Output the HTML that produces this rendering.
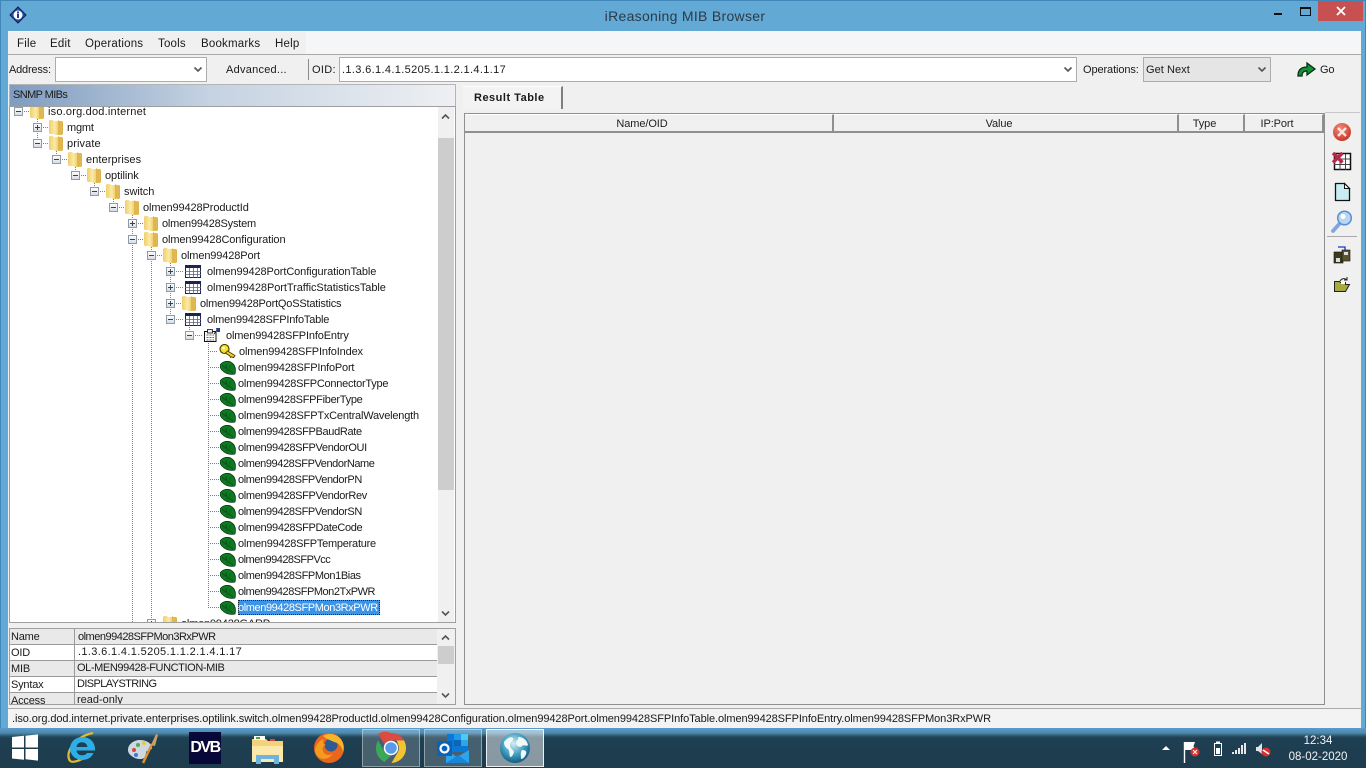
<!DOCTYPE html>
<html><head><meta charset="utf-8"><title>iReasoning MIB Browser</title>
<style>
html,body{margin:0;padding:0;width:1366px;height:768px;overflow:hidden;background:#62a9d6}
body{font:11px/16px "Liberation Sans",Arial,sans-serif;color:#1a1a1a;letter-spacing:-.2px;position:relative}
div{position:absolute;box-sizing:border-box;white-space:nowrap}
.t{height:16px;line-height:16px}
.m{top:36px;letter-spacing:.2px;font-size:11.5px;height:16px;line-height:17px}
svg{position:absolute;left:0;top:0}
.h{background:#f0f0f0;border-right:2px solid #8f8f8f;border-bottom:2px solid #8f8f8f;border-top:1px solid #fff;text-align:center;top:114px;height:19px;line-height:18px;color:#222;padding-right:13px;letter-spacing:-.1px}
.c1{left:0;width:65px;height:16px;border-right:1px solid #9a9a9a;border-bottom:1px solid #9a9a9a;padding-left:1px;line-height:17px}
.c2{left:65px;width:362px;height:16px;border-bottom:1px solid #9a9a9a;padding-left:2px;line-height:15px;letter-spacing:-.4px}
.g{background:#e9e9e9}.w{background:#fff}
</style></head><body>
<svg width="0" height="0" style="position:absolute">
<defs>
<linearGradient id="fg" x1="0" x2="1" y1="0" y2="0"><stop offset="0" stop-color="#efcf6c"/><stop offset=".4" stop-color="#fbeaa6"/><stop offset=".65" stop-color="#f0d070"/><stop offset="1" stop-color="#d9ae48"/></linearGradient>
<linearGradient id="bb" x1="0" x2="0" y1="0" y2="1"><stop offset="0" stop-color="#fff"/><stop offset="1" stop-color="#d5dce4"/></linearGradient>
<radialGradient id="rd" cx=".4" cy=".3" r=".8"><stop offset="0" stop-color="#f08a78"/><stop offset="1" stop-color="#c42f1f"/></radialGradient>
<radialGradient id="gl" cx=".45" cy=".35" r=".7"><stop offset="0" stop-color="#d6eef6"/><stop offset=".55" stop-color="#3e9dbd"/><stop offset="1" stop-color="#0d4f75"/></radialGradient>
<symbol id="fo" viewBox="0 0 14 16"><path d="M0 2l1-1h3l1 1h8l1 1v12l-1 1H6l-1-1H1l-1-1z" fill="url(#fg)"/><path d="M9 1l3 2v12l-3 1z" fill="#dfb64f"/></symbol>
<symbol id="ta" viewBox="0 0 16 13"><rect x=".5" y=".5" width="15" height="12" fill="#fff" stroke="#1c2452"/><rect width="16" height="3" fill="#1c2452"/><path d="M0 6.500h16M0 9.500h16M4.500 3v10M8.500 3v10M12.500 3v10" stroke="#5a6080" stroke-width=".8"/></symbol>
<symbol id="le" viewBox="0 0 16 14"><path d="M0 4C3 0 9-1 12 2c3 2 4 6 3 11-4 1-9 0-12-3C1 9 0 6 0 4z" fill="#0f7a24" stroke="#063a10" stroke-width=".8"/><path d="M2 4l11 8M6 3l1 4M10 4v4M3 7h4M6 10l3-1" stroke="#0a5518" stroke-width=".9" fill="none"/></symbol>
<symbol id="ke" viewBox="0 0 17 14"><circle cx="5.500" cy="5" r="4.500" fill="#f6e21e" stroke="#4a3a00" stroke-width="1.100"/><circle cx="4.500" cy="4" r="1.300" fill="#fff"/><path d="M8.500 7l7.500 4.500-1.500 2.300-1.800-1-1 .7-1-1.800-4.300-2.700z" fill="#f0d420" stroke="#4a3a00" stroke-width=".9"/></symbol>
<symbol id="en" viewBox="0 0 16 14"><path d="M.5 3.500h11.500v10H.5z" fill="#fff" stroke="#111"/><path d="M2.500 7h7.500M2.500 9.500h7.500M2.500 12h7.500" stroke="#333" stroke-width=".8" stroke-dasharray="2 1"/><rect x="3.500" y="1.500" width="5" height="3.500" fill="#eee" stroke="#111" stroke-width=".8"/><path d="M10 6l3-4" stroke="#222"/><path d="M12 0h4v4h-3z" fill="#1d3f8a"/></symbol>
<symbol id="pl" viewBox="0 0 9 9"><rect x=".5" y=".5" width="8" height="8" fill="url(#bb)" stroke="#8e9aa6"/><path d="M2 4.500h5M4.500 2v5" stroke="#39424c"/></symbol>
<symbol id="mi" viewBox="0 0 9 9"><rect x=".5" y=".5" width="8" height="8" fill="url(#bb)" stroke="#8e9aa6"/><path d="M2 4.500h5" stroke="#39424c"/></symbol>
</defs></svg>

<!-- window frame -->
<div style="left:0;top:0;width:1366px;height:735px;background:#62a9d6;border:1px solid #4186b8"></div>
<svg width="36" height="30" style="left:0;top:0"><path d="M18 7l8 8-8 8-8-8z" fill="#2a4aa8" stroke="#0f1f55"/><circle cx="18" cy="15" r="4.500" fill="#fff"/><rect x="17" y="13.500" width="2" height="4.500" fill="#1f3b96"/><rect x="17" y="11.500" width="2" height="1.500" fill="#1f3b96"/></svg>
<div style="left:485px;width:400px;top:6px;height:20px;text-align:center;font-size:14px;line-height:20px;color:#2d3a45;letter-spacing:.3px">iReasoning MIB Browser</div>
<div style="left:1274px;top:13px;width:8px;height:2px;background:#111"></div>
<div style="left:1300px;top:7px;width:11px;height:9px;border:1px solid #111;border-top-width:2px"></div>
<div style="left:1318px;top:1px;width:45px;height:20px;background:#c75050"></div>
<svg width="12" height="12" style="left:1335px;top:5px"><path d="M2 2l8 8M10 2l-8 8" stroke="#fff" stroke-width="1.800"/></svg>

<!-- client -->
<div style="left:8px;top:31px;width:1353px;height:697px;background:#f0f0f0"></div>
<div style="left:8px;top:31px;width:1353px;height:24px;background:#f5f6f7;border-bottom:1px solid #a9a9a9"></div>
<div style="left:8px;top:32px;width:298px;height:22px;background:#f0f0f0"></div>
<div class="m" style="left:17px">File</div>
<div class="m" style="left:50px">Edit</div>
<div class="m" style="left:85px">Operations</div>
<div class="m" style="left:158px">Tools</div>
<div class="m" style="left:201px">Bookmarks</div>
<div class="m" style="left:275px">Help</div>

<!-- toolbar -->
<div class="t" style="left:9px;top:62px">Address:</div>
<div style="left:55px;top:57px;width:152px;height:25px;background:#fff;border:1px solid #acacac"></div>
<div class="t" style="left:226px;top:62px;letter-spacing:.25px">Advanced...</div>
<div style="left:308px;top:59px;width:1px;height:21px;background:#8a8a8a"></div>
<div class="t" style="left:312px;top:62px;letter-spacing:.3px">OID:</div>
<div style="left:339px;top:57px;width:738px;height:25px;background:#fff;border:1px solid #acacac"></div>
<div class="t" style="left:342px;top:62px;letter-spacing:.35px">.1.3.6.1.4.1.5205.1.1.2.1.4.1.17</div>
<div class="t" style="left:1083px;top:62px;letter-spacing:-.1px">Operations:</div>
<div style="left:1143px;top:57px;width:128px;height:25px;background:#e5e5e5;border:1px solid #acacac"></div>
<div class="t" style="left:1146px;top:62px;letter-spacing:.05px">Get Next</div>
<svg width="1366" height="90" style="left:0;top:0">
<path d="M194.500 67.500l3.500 3.500 3.500-3.500M1064.500 67.500l3.500 3.500 3.500-3.500M1258.500 67.500l3.500 3.500 3.500-3.500" fill="none" stroke="#555" stroke-width="1.600"/>
<path d="M1298 76c0-6 3-9 9-9v-4l8 6-8 6v-4c-3 0-5 1-5 5z" fill="#12923a" stroke="#0b2e14" stroke-width="1.300"/>
</svg>
<div class="t" style="left:1320px;top:62px">Go</div>

<!-- left pane header -->
<div style="left:9px;top:84px;width:447px;height:23px;background:linear-gradient(90deg,#7f9cc0,#c5d2e2 45%,#eef0f3);border:1px solid #b5b5b5"></div>
<div class="t" style="left:13px;top:87px;letter-spacing:-.6px;line-height:17px">SNMP MIBs</div>

<!-- tree -->
<div style="left:9px;top:106px;width:447px;height:517px;background:#fff;border:1px solid #9f9f9f"></div>
<svg width="1366" height="768" style="clip-path:polygon(10px 107px,438px 107px,438px 622px,10px 622px)">
<g stroke="#808080" stroke-dasharray="1 1" fill="none">
<path d="M37.500 117v26M56.500 149v10M75.500 165v10M94.500 181v10M113.500 197v10M132.500 213v420M151.500 245v400M170.500 261v58M189.500 325v10M208.500 341v266.500"/>
<path d="M22 111.500h8M41 127.500h8M41 143.500h8M60 159.500h8M79 175.500h8M98 191.500h8M117 207.500h8M136 223.500h8M136 239.500h8M155 255.500h8M174 271.500h10M174 287.500h10M174 303.500h8M174 319.500h10M193 335.500h10M208 351.500h10M208 367.500h11M208 383.500h11M208 399.500h11M208 415.500h11M208 431.500h11M208 447.500h11M208 463.500h11M208 479.500h11M208 495.500h11M208 511.500h11M208 527.500h11M208 543.500h11M208 559.500h11M208 575.500h11M208 591.500h11M208 607.500h11M155 623.500h8"/>
</g>
<use href="#mi" x="14" y="107" width="9" height="9"/>
<use href="#pl" x="33" y="123" width="9" height="9"/>
<use href="#mi" x="33" y="139" width="9" height="9"/>
<use href="#mi" x="52" y="155" width="9" height="9"/>
<use href="#mi" x="71" y="171" width="9" height="9"/>
<use href="#mi" x="90" y="187" width="9" height="9"/>
<use href="#mi" x="109" y="203" width="9" height="9"/>
<use href="#pl" x="128" y="219" width="9" height="9"/>
<use href="#mi" x="128" y="235" width="9" height="9"/>
<use href="#mi" x="147" y="251" width="9" height="9"/>
<use href="#pl" x="166" y="267" width="9" height="9"/>
<use href="#pl" x="166" y="283" width="9" height="9"/>
<use href="#pl" x="166" y="299" width="9" height="9"/>
<use href="#mi" x="166" y="315" width="9" height="9"/>
<use href="#mi" x="185" y="331" width="9" height="9"/>
<use href="#pl" x="147" y="619" width="9" height="9"/>
<use href="#fo" x="30" y="103" width="14" height="16"/>
<use href="#fo" x="49" y="119" width="14" height="16"/>
<use href="#fo" x="49" y="135" width="14" height="16"/>
<use href="#fo" x="68" y="151" width="14" height="16"/>
<use href="#fo" x="87" y="167" width="14" height="16"/>
<use href="#fo" x="106" y="183" width="14" height="16"/>
<use href="#fo" x="125" y="199" width="14" height="16"/>
<use href="#fo" x="144" y="215" width="14" height="16"/>
<use href="#fo" x="144" y="231" width="14" height="16"/>
<use href="#fo" x="163" y="247" width="14" height="16"/>
<use href="#fo" x="182" y="295" width="14" height="16"/>
<use href="#fo" x="163" y="615" width="14" height="16"/>
<use href="#ta" x="185" y="265" width="16" height="13"/>
<use href="#ta" x="185" y="281" width="16" height="13"/>
<use href="#ta" x="185" y="313" width="16" height="13"/>
<use href="#en" x="204" y="328" width="16" height="14"/>
<use href="#ke" x="219" y="344" width="17" height="14"/>
<use href="#le" x="220" y="361" width="16" height="14"/>
<use href="#le" x="220" y="377" width="16" height="14"/>
<use href="#le" x="220" y="393" width="16" height="14"/>
<use href="#le" x="220" y="409" width="16" height="14"/>
<use href="#le" x="220" y="425" width="16" height="14"/>
<use href="#le" x="220" y="441" width="16" height="14"/>
<use href="#le" x="220" y="457" width="16" height="14"/>
<use href="#le" x="220" y="473" width="16" height="14"/>
<use href="#le" x="220" y="489" width="16" height="14"/>
<use href="#le" x="220" y="505" width="16" height="14"/>
<use href="#le" x="220" y="521" width="16" height="14"/>
<use href="#le" x="220" y="537" width="16" height="14"/>
<use href="#le" x="220" y="553" width="16" height="14"/>
<use href="#le" x="220" y="569" width="16" height="14"/>
<use href="#le" x="220" y="585" width="16" height="14"/>
<use href="#le" x="220" y="601" width="16" height="14"/>
</svg>
<div style="left:10px;top:107px;width:428px;height:515px;overflow:hidden">
<div style="left:0;top:1px;width:428px;height:520px">
<div class="t" style="left:38px;top:-4px;letter-spacing:.2px">iso.org.dod.internet</div>
<div class="t" style="left:57px;top:12px">mgmt</div>
<div class="t" style="left:57px;top:28px;letter-spacing:.1px">private</div>
<div class="t" style="left:76px;top:44px;letter-spacing:.07px">enterprises</div>
<div class="t" style="left:95px;top:60px;letter-spacing:-.07px">optilink</div>
<div class="t" style="left:114px;top:76px;letter-spacing:-.05px">switch</div>
<div class="t" style="left:133px;top:92px;letter-spacing:-.1px">olmen99428ProductId</div>
<div class="t" style="left:152px;top:108px">olmen99428System</div>
<div class="t" style="left:152px;top:124px;letter-spacing:-.11px">olmen99428Configuration</div>
<div class="t" style="left:171px;top:140px;letter-spacing:-.13px">olmen99428Port</div>
<div class="t" style="left:197px;top:156px;letter-spacing:-.1px">olmen99428PortConfigurationTable</div>
<div class="t" style="left:197px;top:172px;letter-spacing:-.06px">olmen99428PortTrafficStatisticsTable</div>
<div class="t" style="left:190px;top:188px">olmen99428PortQoSStatistics</div>
<div class="t" style="left:197px;top:204px">olmen99428SFPInfoTable</div>
<div class="t" style="left:216px;top:220px;letter-spacing:-.15px">olmen99428SFPInfoEntry</div>
<div class="t" style="left:229px;top:236px;letter-spacing:-.15px">olmen99428SFPInfoIndex</div>
<div class="t" style="left:228px;top:252px">olmen99428SFPInfoPort</div>
<div class="t" style="left:228px;top:268px;letter-spacing:-.24px">olmen99428SFPConnectorType</div>
<div class="t" style="left:228px;top:284px;letter-spacing:-.29px">olmen99428SFPFiberType</div>
<div class="t" style="left:228px;top:300px">olmen99428SFPTxCentralWavelength</div>
<div class="t" style="left:228px;top:316px;letter-spacing:-.34px">olmen99428SFPBaudRate</div>
<div class="t" style="left:228px;top:332px;letter-spacing:-.34px">olmen99428SFPVendorOUI</div>
<div class="t" style="left:228px;top:348px;letter-spacing:-.42px">olmen99428SFPVendorName</div>
<div class="t" style="left:228px;top:364px;letter-spacing:-.39px">olmen99428SFPVendorPN</div>
<div class="t" style="left:228px;top:380px;letter-spacing:-.34px">olmen99428SFPVendorRev</div>
<div class="t" style="left:228px;top:396px;letter-spacing:-.39px">olmen99428SFPVendorSN</div>
<div class="t" style="left:228px;top:412px;letter-spacing:-.34px">olmen99428SFPDateCode</div>
<div class="t" style="left:228px;top:428px;letter-spacing:-.24px">olmen99428SFPTemperature</div>
<div class="t" style="left:228px;top:444px;letter-spacing:-.5px">olmen99428SFPVcc</div>
<div class="t" style="left:228px;top:460px;letter-spacing:-.39px">olmen99428SFPMon1Bias</div>
<div class="t" style="left:228px;top:476px;letter-spacing:-.47px">olmen99428SFPMon2TxPWR</div>
<div class="t" style="left:228px;top:492px;width:142px;height:15px;background:#3d94e6;color:#fff;outline:1px dotted #1a2b3c;outline-offset:-1px;letter-spacing:-.4px">olmen99428SFPMon3RxPWR</div>
<div class="t" style="left:171px;top:508px">olmen99428GARP</div>
</div>
</div>
<!-- tree scrollbar -->
<div style="left:438px;top:107px;width:16px;height:515px;background:#f0f0f0"></div>
<div style="left:438px;top:138px;width:16px;height:352px;background:#cdcdcd"></div>
<svg width="1366" height="640">
<path d="M442 118.500l3.500-3.500 3.500 3.500M442 611.500l3.500 3.500 3.500-3.500" fill="none" stroke="#555" stroke-width="1.600"/>
</svg>

<!-- details table -->
<div style="left:9px;top:628px;width:447px;height:77px;background:#f0f0f0;border:1px solid #9f9f9f;overflow:hidden">
<div style="left:0;top:0;width:428px;height:77px;overflow:hidden">
<div class="c1 g" style="top:0">Name</div><div class="c2 g" style="top:0;padding-left:3px;line-height:17px;letter-spacing:-.5px">olmen99428SFPMon3RxPWR</div>
<div class="c1 w" style="top:16px">OID</div><div class="c2 w" style="top:16px;padding-left:3px;letter-spacing:.35px">.1.3.6.1.4.1.5205.1.1.2.1.4.1.17</div>
<div class="c1 g" style="top:32px">MIB</div><div class="c2 g" style="top:32px">OL-MEN99428-FUNCTION-MIB</div>
<div class="c1 w" style="top:48px">Syntax</div><div class="c2 w" style="top:48px;letter-spacing:-.6px">DISPLAYSTRING</div>
<div class="c1 g" style="top:64px;border-bottom:0">Access</div><div class="c2 g" style="top:64px;border-bottom:0;letter-spacing:0">read-only</div>
</div>
<div style="left:428px;top:17px;width:16px;height:18px;background:#cdcdcd"></div>
</div>
<svg width="1366" height="768">
<path d="M442 639.500l3.500-3.500 3.500 3.500M442 693.500l3.500 3.500 3.500-3.500" fill="none" stroke="#555" stroke-width="1.600"/>
</svg>

<!-- right pane -->
<div style="left:463px;top:86px;width:100px;height:23px;background:#f3f3f3;border-right:2px solid #7f7f7f;border-top:1px solid #fff"></div>
<div class="t" style="left:474px;top:90px;font-weight:bold;letter-spacing:.5px">Result Table</div>
<div style="left:464px;top:113px;width:861px;height:592px;background:#f0f0f0;border:1px solid #8f8f8f"></div>
<div class="h" style="left:465px;width:369px">Name/OID</div>
<div class="h" style="left:834px;width:345px">Value</div>
<div class="h" style="left:1179px;width:66px">Type</div>
<div class="h" style="left:1245px;width:79px">IP:Port</div>
<div style="left:1325px;top:112px;width:35px;height:1px;background:#c8c8c8"></div>

<!-- right toolbar icons -->
<svg width="1366" height="768">
<circle cx="1342" cy="132" r="9" fill="url(#rd)"/>
<path d="M1338 128l8 8M1346 128l-8 8" stroke="#fbe3de" stroke-width="2.400"/>
<rect x="1334.500" y="153.500" width="16" height="16" fill="#fff" stroke="#111" stroke-width="1.500"/>
<path d="M1334 159h16M1334 164.500h16M1340 154v16M1345.500 154v16" stroke="#444"/>
<path d="M1333 153l9.500 9.500M1342.500 153l-9.500 9.500" stroke="#b32a4a" stroke-width="3.400"/>
<path d="M1335.500 183.500h9l5 5v12h-14z" fill="#c8ecf2" stroke="#111" stroke-width="1.300"/>
<path d="M1344.500 183.500v5h5z" fill="#fff" stroke="#111"/>
<path d="M1333 231l8-9" stroke="#7fa6e0" stroke-width="3.800" stroke-linecap="round"/>
<circle cx="1344.500" cy="218" r="6.800" fill="#b8d8f2" stroke="#5b8fd0" stroke-width="1.500"/>
<circle cx="1343" cy="216.500" r="2.500" fill="#fff"/>
<rect x="1327" y="236" width="30" height="1" fill="#a9a9a9"/>
<path d="M1338 247h7v4" stroke="#1a35c9" fill="none" stroke-width="1.300"/>
<rect x="1334" y="252" width="9" height="11" fill="#3a3a1e" stroke="#111" stroke-width=".6"/>
<rect x="1342" y="250" width="8" height="11" fill="#57552c" stroke="#111" stroke-width=".6"/>
<rect x="1336" y="258" width="4" height="4" fill="#ddd"/><rect x="1344" y="252" width="4" height="3" fill="#ddd"/>
<path d="M1334.500 281.500h5l1 1h5v2h4l-4 7h-11z" fill="#a7a83e" stroke="#222"/>
<path d="M1340 281c2-3 5-3 7-1M1347 277v3h-3" fill="none" stroke="#222"/>
<rect x="1341" y="282" width="4" height="2" fill="#fff"/>
</svg>

<!-- status bar -->
<div style="left:8px;top:708px;width:1353px;height:20px;background:#f3f3f3;border-top:1px solid #a9a9a9"></div>
<div class="t" style="left:12px;top:711px;letter-spacing:-.085px">.iso.org.dod.internet.private.enterprises.optilink.switch.olmen99428ProductId.olmen99428Configuration.olmen99428Port.olmen99428SFPInfoTable.olmen99428SFPInfoEntry.olmen99428SFPMon3RxPWR</div>

<!-- taskbar -->
<div style="left:0;top:728px;width:1366px;height:40px;background:linear-gradient(180deg,#5a9ccb 0,#4d89ae 5px,#2b5369 8px,#1f3f52 10px,#1d3c4e 100%)"></div>
<div style="left:362px;top:729px;width:58px;height:38px;background:rgba(255,255,255,.18);border:1px solid rgba(255,255,255,.4)"></div>
<div style="left:424px;top:729px;width:58px;height:38px;background:rgba(255,255,255,.18);border:1px solid rgba(255,255,255,.4)"></div>
<div style="left:486px;top:729px;width:58px;height:38px;background:rgba(255,255,255,.48);border:1px solid rgba(255,255,255,.85)"></div>
<svg width="1366" height="768">
<!-- windows -->
<path d="M12 737l12-1.200v11.700H12zM25.500 735.700l12.500-1.300v13.100H25.500zM12 749h12v10.700l-12-1.200zM25.500 749H38v11.600l-12.500-1.300z" fill="#fff"/>
<!-- IE -->
<path d="M70 761C64 752 76 736 93 733M70 761c3 2 8 0 12-2" fill="none" stroke="#e2bc2c" stroke-width="2.200"/>
<path d="M82 737a12 11.500 0 0 0 0 23c5.500 0 9.500-2.500 11.500-7h-6.500c-1 1.500-2.700 2.300-5 2.300-3 0-5-1.800-5.500-4.800H95c.6-8-5-13.500-13-13.500zm-5.500 10c.5-3 2.500-4.800 5.500-4.800s5 1.800 5.500 4.800z" fill="#2eaee6"/>
<!-- paint -->
<path d="M128 750c0-6 6-10 12-10 6 0 11 3 12 7 .5 3-3 3-5 4-2 1 0 5-3 7-3 2-8 1-11-1-3-2-5-4-5-7z" fill="#cdd8e0"/>
<circle cx="134" cy="750" r="2" fill="#d8463c"/><circle cx="138" cy="745" r="2" fill="#4fae4a"/><circle cx="144" cy="743" r="2" fill="#e6c93a"/><circle cx="136" cy="755" r="2" fill="#3a7ad8"/>
<path d="M143 763l9-19" stroke="#e0902e" stroke-width="2.500"/><path d="M151 745l5-11 2 1-3 11z" fill="#c9a060"/>
<!-- DVB -->
<rect x="189" y="732" width="32" height="32" fill="#070738"/>
<!-- explorer -->
<path d="M252 739h14l2 2h15v21h-31z" fill="#f3d27a"/><path d="M254 736h11v4h-11z" fill="#fff"/><rect x="256" y="737" width="4" height="2" fill="#4aa84a"/><rect x="270" y="739" width="5" height="2" fill="#d84a3a"/>
<path d="M252 746h31v16h-31z" fill="#fbe9ac"/>
<path d="M256 764v-9h23v9h-5v-5h-13v5z" fill="#6fb4dc"/>
<!-- firefox -->
<circle cx="329" cy="748" r="15" fill="#e8671c"/>
<circle cx="331" cy="745" r="6.500" fill="#2f5a92"/>
<path d="M315 750c1-6 5-10 9-11-2 3-1 5 2 6-3 1-4 3-3 6 1 4 6 5 10 3-3 4-9 6-13 4-3-2-5-5-5-8z" fill="#f59c1e"/>
<path d="M323 736c6-4 15-2 19 5 2 4 2 8 1 11-1-5-4-9-9-10-4-2-8-3-11-6z" fill="#f6b62c"/>
<!-- chrome -->
<path d="M391 733a15 15 0 0 1 13 7.500h-13a7.500 7.500 0 0 0-6.500 3.800L378 733.800A15 15 0 0 1 391 733z" fill="#dd4b3e"/>
<path d="M376 748a15 15 0 0 1 2-7.500l6.500 11.200a7.500 7.500 0 0 0 6.500 3.800L384.500 762A15 15 0 0 1 376 748z" fill="#3aa856"/>
<path d="M404 740.500a15 15 0 0 1-12.500 22.500l6.500-11.300a7.500 7.500 0 0 0 0-7.500 7.500 7.500 0 0 0-1.500-3.700z" fill="#f4c430"/>
<circle cx="391" cy="748" r="6.500" fill="#5a9aea" stroke="#fff" stroke-width="1.500"/>
<!-- outlook -->
<rect x="447" y="734" width="21" height="18" fill="#0a78d4"/>
<rect x="454" y="734" width="7" height="6" fill="#1e9bef"/><rect x="461" y="734" width="7" height="6" fill="#50c8f5"/><rect x="454" y="740" width="7" height="6" fill="#0f64b4"/><rect x="461" y="740" width="7" height="6" fill="#28a8ea"/>
<path d="M446 750l11 7 12-7v13h-23z" fill="#2da5ec"/><path d="M446 763l12-8 11 8z" fill="#1a86d8"/>
<rect x="437" y="741" width="15" height="15" fill="#0a63b8"/>
<circle cx="444.500" cy="748.500" r="4" fill="none" stroke="#fff" stroke-width="2.200"/>
<!-- globe -->
<circle cx="515" cy="748" r="15" fill="url(#gl)"/>
<path d="M504 742c3-4 7-6 9-4 1 3-3 4-3 7 0 4 3 4 4 7-1 3-2 5-4 5-1-3 0-6-2-8-2-1-4-3-4-7zM518 737c5 0 9 3 10 8-2 2-4-1-6 1-2 2-6 0-6-3 0-3 3-3 2-6zM522 750c3 0 5 1 4 4-1 3-3 5-5 5 0-3-1-6 1-9z" fill="#f2f7f9"/>
<!-- tray -->
<path d="M1162 750l4-4 4 4z" fill="#fff"/>
<path d="M1184.500 742v21" stroke="#fff" stroke-width="1.400"/><path d="M1185 742h10l-1.500 4 1.500 4h-10z" fill="#fff"/>
<circle cx="1195" cy="752" r="4.500" fill="#d8302a"/><path d="M1193 750l4 4M1197 750l-4 4" stroke="#fff"/>
<rect x="1214.500" y="743.500" width="7" height="12" fill="none" stroke="#fff"/><rect x="1216" y="741.500" width="4" height="2" fill="#fff"/><rect x="1216" y="748" width="4" height="6" fill="#fff"/>
<path d="M1232 752h2v2h-2zM1235 750h2v4h-2zM1238 748h2v6h-2zM1241 745h2v9h-2zM1244 743h2v11h-2z" fill="#e8e8e8"/>
<path d="M1256 747h2l4-4v11l-4-3h-2z" fill="#dfe5e9"/>
<circle cx="1266" cy="752" r="4.500" fill="#d8302a"/><path d="M1263 750l6 4" stroke="#fff" stroke-width="1.500"/>
</svg>
<div style="left:189px;top:740px;width:32px;text-align:center;color:#fff;font-size:16px;line-height:16px;font-weight:bold;letter-spacing:-1.500px;height:16px">DVB</div>
<div style="left:1288px;top:733px;width:60px;text-align:center;color:#f1f4f6;font-size:11.500px;line-height:16px;letter-spacing:0;height:16px">12:34</div>
<div style="left:1288px;top:749px;width:60px;text-align:center;color:#f1f4f6;font-size:11.500px;line-height:16px;letter-spacing:0;height:16px">08-02-2020</div>
</body></html>
